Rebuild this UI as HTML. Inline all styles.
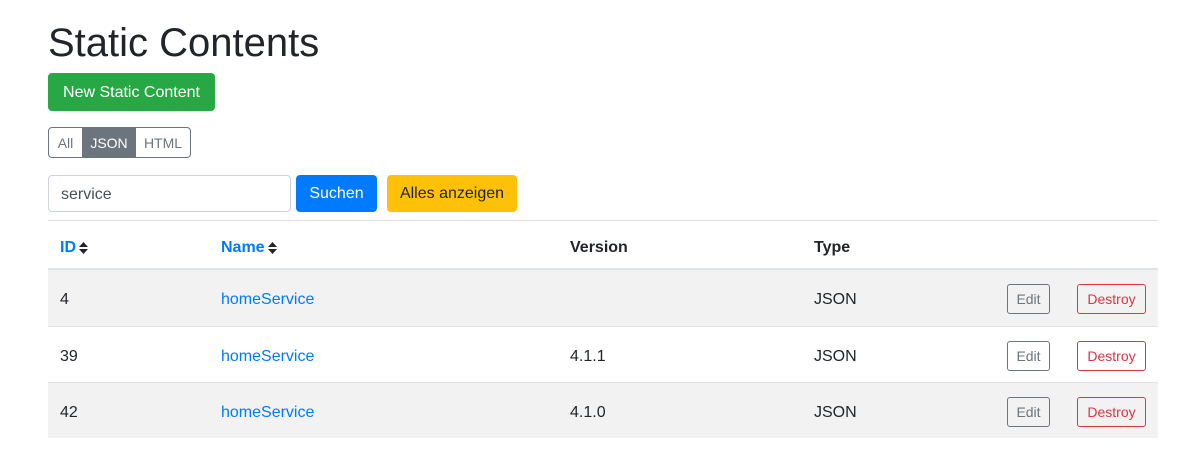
<!DOCTYPE html>
<html><head><style>
*{box-sizing:border-box}
body{margin:0;font-family:"Liberation Sans",sans-serif;color:#212529;background:#fff;font-size:16px}
.a{position:absolute}
h1{position:absolute;left:48px;top:19px;margin:0;font-size:40px;font-weight:500;line-height:48px}
.btn{position:absolute;border-radius:4px;display:flex;align-items:center;justify-content:center;font-size:16px}
.sm{font-size:14px;border-radius:3px;background:transparent}
.row{position:absolute;left:48px;width:1110px;height:56px;border-top:1px solid #dee2e6}
.cell{position:absolute;top:2px;line-height:56px;font-size:16px}
a{color:#007bff;text-decoration:none}
.arr{display:inline-block;vertical-align:middle;margin-left:3px}
</style></head><body>
<h1>Static Contents</h1>
<div class="btn" style="left:48px;top:73px;width:167px;height:38px;background:#28a745;color:#fff;padding-top:2px">New Static Content</div>
<div class="a" style="left:48px;top:127px;width:143px;height:31px;border:1px solid #6c757d;border-radius:4px;overflow:hidden;display:flex;font-size:14px;color:#6c757d">
<div style="width:33px;display:flex;align-items:center;justify-content:center">All</div>
<div style="width:54px;background:#6c757d;color:#fff;display:flex;align-items:center;justify-content:center">JSON</div>
<div style="flex:1;display:flex;align-items:center;justify-content:center">HTML</div></div>
<div class="a" style="left:48px;top:175px;width:243px;height:37px;border:1px solid #ced4da;border-radius:4px;padding-left:12px;line-height:37px;color:#495057">service</div>
<div class="btn" style="left:296px;top:175px;width:81px;height:37px;background:#007bff;color:#fff;padding-top:1px">Suchen</div>
<div class="btn" style="left:387px;top:175px;width:130px;height:37px;background:#ffc107;color:#212529;padding-top:1px">Alles anzeigen</div>
<div class="row" style="top:220px;height:50px;border-bottom:2px solid #dee2e6;font-weight:bold">
<div class="cell" style="left:12px;line-height:50px"><a>ID</a><svg class="arr" width="9" height="12" viewBox="0 0 9 12"><path d="M4.5 0L9 5H0zM4.5 12L0 7h9z" fill="#212529"/></svg></div>
<div class="cell" style="left:173px;line-height:50px"><a>Name</a><svg class="arr" width="9" height="12" viewBox="0 0 9 12"><path d="M4.5 0L9 5H0zM4.5 12L0 7h9z" fill="#212529"/></svg></div>
<div class="cell" style="left:522px;line-height:50px">Version</div>
<div class="cell" style="left:766px;line-height:50px">Type</div>
</div>
<div class="row" style="top:270px;background:#f2f2f2;border-top:none"><div class="cell" style="left:12px">4</div><div class="cell" style="left:173px"><a>homeService</a></div><div class="cell" style="left:766px">JSON</div>
<div class="btn sm" style="left:959px;top:14px;width:43px;height:30px;border:1px solid #6c757d;color:#6c757d">Edit</div><div class="btn sm" style="left:1029px;top:14px;width:69px;height:30px;border:1px solid #dc3545;color:#dc3545">Destroy</div></div>
<div class="row" style="top:326px"><div class="cell" style="left:12px">39</div><div class="cell" style="left:173px"><a>homeService</a></div><div class="cell" style="left:522px">4.1.1</div><div class="cell" style="left:766px">JSON</div>
<div class="btn sm" style="left:959px;top:14px;width:43px;height:30px;border:1px solid #6c757d;color:#6c757d">Edit</div><div class="btn sm" style="left:1029px;top:14px;width:69px;height:30px;border:1px solid #dc3545;color:#dc3545">Destroy</div></div>
<div class="row" style="top:382px;background:#f2f2f2"><div class="cell" style="left:12px">42</div><div class="cell" style="left:173px"><a>homeService</a></div><div class="cell" style="left:522px">4.1.0</div><div class="cell" style="left:766px">JSON</div>
<div class="btn sm" style="left:959px;top:14px;width:43px;height:30px;border:1px solid #6c757d;color:#6c757d">Edit</div><div class="btn sm" style="left:1029px;top:14px;width:69px;height:30px;border:1px solid #dc3545;color:#dc3545">Destroy</div></div>
</body></html>
